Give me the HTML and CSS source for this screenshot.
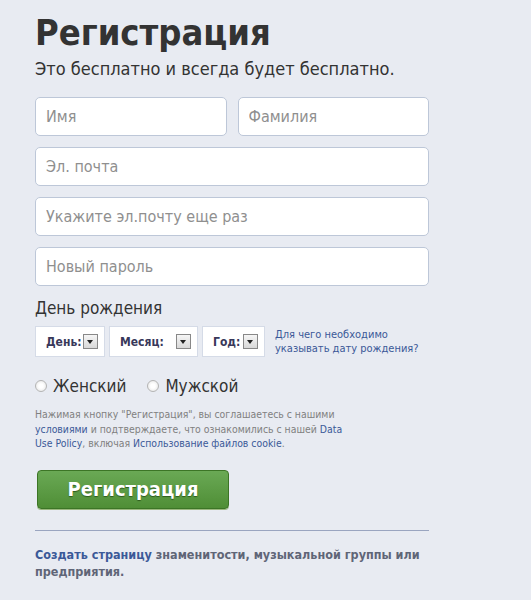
FILE: index.html
```html
<!DOCTYPE html>
<html lang="ru">

<head>
  <meta charset="UTF-8">
  <title>Регистрация</title>
  <link rel="stylesheet" href="styles.css">
</head>

<body>
  <div class="signup">
    <h1>Регистрация</h1>
    <p class="lead">Это бесплатно и всегда будет бесплатно.</p>

    <div class="name-row">
      <input class="field" type="text" placeholder="Имя">
      <input class="field" type="text" placeholder="Фамилия">
    </div>
    <input class="field" type="text" placeholder="Эл. почта">
    <input class="field" type="text" placeholder="Укажите эл.почту еще раз">
    <input class="field" type="password" placeholder="Новый пароль">

    <div class="birthday-title">День рождения</div>
    <div class="birthday-row">
      <div class="pick pick-day"><span>День:</span><i class="arrow"></i></div>
      <div class="pick pick-month"><span>Месяц:</span><i class="arrow"></i></div>
      <div class="pick pick-year"><span>Год:</span><i class="arrow"></i></div>
      <a class="why" href="#">Для чего необходимо указывать дату рождения?</a>
    </div>

    <div class="gender">
      <label><span class="radio"></span>Женский</label>
      <label><span class="radio"></span>Мужской</label>
    </div>

    <p class="terms">
      Нажимая кнопку "Регистрация", вы соглашаетесь с нашими
      <a href="#">условиями</a> и подтверждаете, что ознакомились с нашей <a href="#">Data Use Policy</a>,
      включая <a href="#">Использование файлов cookie</a>.
    </p>

    <button class="submit">Регистрация</button>

    <hr>

    <p class="pages"><a href="#">Создать страницу</a> знаменитости, музыкальной группы или предприятия.</p>
  </div>
</body>

</html>
```

FILE: styles.css
```css
body {
  margin: 0;
  background: #e8ebf2;
  font-family: 'DejaVu Sans Condensed', 'Liberation Sans', sans-serif;
  color: #333;
}

.signup {
  width: 394px;
  padding: 12px 0 0 35px;
}

h1 {
  margin: 0;
  font-size: 36px;
  line-height: 42px;
  color: #333;
}

.lead {
  margin: 4px 0 17px;
  font-size: 18px;
  line-height: 22px;
}

.name-row {
  display: flex;
  gap: 11px;
}

.field {
  box-sizing: border-box;
  display: block;
  width: 100%;
  height: 39px;
  margin-bottom: 11px;
  padding: 0 10px;
  border: 1px solid #bdc7d8;
  border-radius: 5px;
  background: #fff;
  font-family: inherit;
  font-size: 16px;
  color: #333;
}

.field::placeholder {
  color: #8f8f8f;
}

.birthday-title {
  margin-top: 7px;
  font-size: 17px;
  line-height: 22px;
}

.birthday-row {
  display: flex;
  align-items: center;
  gap: 4px;
  margin-top: 7px;
}

.pick {
  flex-shrink: 0;
  box-sizing: border-box;
  height: 31px;
  display: flex;
  align-items: center;
  justify-content: space-between;
  padding: 0 6px 0 10px;
  border: 1px solid #d5dbe7;
  background: #fff;
  font-size: 12px;
  font-weight: bold;
  color: #38385a;
}

.pick-day { width: 70px; }
.pick-month { width: 89px; }
.pick-year { width: 63px; }

.arrow {
  box-sizing: border-box;
  width: 15px;
  height: 15px;
  border: 1px solid #888;
  background: linear-gradient(#f6f6f6, #d8d8d8);
  position: relative;
}

.arrow::after {
  content: "";
  position: absolute;
  left: 3px;
  top: 5px;
  border-left: 3.5px solid transparent;
  border-right: 3.5px solid transparent;
  border-top: 4px solid #222;
}

.why {
  width: 145px;
  margin-left: 6px;
  font-size: 11px;
  line-height: 14px;
  color: #3b5998;
  text-decoration: none;
}

.gender {
  display: flex;
  gap: 21px;
  margin-top: 19px;
  font-size: 17px;
}

.gender label {
  display: flex;
  align-items: center;
}

.radio {
  box-sizing: border-box;
  width: 12px;
  height: 12px;
  margin-right: 6px;
  border: 1px solid #b4b4b4;
  border-radius: 50%;
  background: radial-gradient(#fff 30%, #e2e2e2);
}

.terms {
  margin: 11px 0 19px;
  font-size: 10.4px;
  line-height: 14.5px;
  color: #808080;
  width: 320px;
}

.terms a {
  color: #3b5998;
  text-decoration: none;
}

.submit {
  width: 192px;
  height: 39px;
  margin-left: 2px;
  border: 1px solid #3c7526;
  border-radius: 4px;
  background: linear-gradient(#6aa955, #4f8e36);
  font-family: inherit;
  font-size: 20px;
  font-weight: bold;
  color: #fff;
  text-shadow: 0 1px 1px #2d5a1c;
  box-shadow: 0 1px 0 #9bb87f;
}

hr {
  margin: 21px 0 0;
  border: 0;
  border-top: 1px solid #9aa5c0;
}

.pages {
  margin: 15px 0 0;
  font-size: 12.5px;
  line-height: 17px;
  font-weight: bold;
  color: #5f6577;
}

.pages a {
  color: #3b5998;
  text-decoration: none;
}
```
